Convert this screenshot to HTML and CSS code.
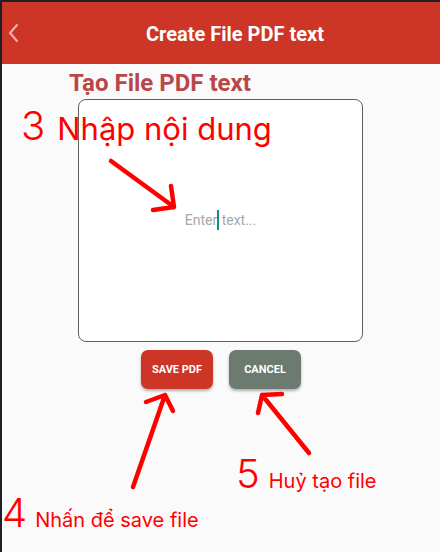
FILE: index.html
```html
<!DOCTYPE html>
<html>
<head>
<meta charset="utf-8">
<link rel="stylesheet" href="styles.css">
</head>
<body>
<div class="frame">
  <header class="appbar">
    <svg class="back" width="12" height="20" viewBox="0 0 12 20"><path d="M9 2 L2 10 L9 18" fill="none" stroke="#f2b3ab" stroke-width="2" stroke-linecap="round" stroke-linejoin="round"/></svg>
    <h1 class="appbar-title">Create File PDF text</h1>
  </header>
  <main class="content">
    <h2 class="page-title">Tạo File PDF text</h2>
    <div class="editor">
      <span class="placeholder">Enter<span class="caret"></span> text...</span>
    </div>
    <div class="actions">
      <button class="btn btn-save">SAVE PDF</button>
      <button class="btn btn-cancel">CANCEL</button>
    </div>
  </main>
  <svg class="arrows" width="440" height="552" viewBox="0 0 440 552">
    <g fill="none" stroke="#ff0000" stroke-width="4.5" stroke-linecap="round" stroke-linejoin="round">
      <path d="M111 161 L174 207 M153 210 L174 207 L171 186"/>
      <path d="M133 487 L165 395 M146 402 L165 395 L173 411"/>
      <path d="M309 453 L262 395 M282 394 L262 395 L258 413"/>
    </g>
  </svg>
  <div class="note note-3"><span class="num">3</span><span class="label-lg">Nhập nội dung</span></div>
  <div class="note note-5"><span class="num">5</span><span class="label">Huỷ tạo file</span></div>
  <div class="note note-4"><span class="num">4</span><span class="label">Nhấn để save file</span></div>
</div>
</body>
</html>
```
FILE: styles.css
```css
* { box-sizing: border-box; margin: 0; padding: 0; }
html, body { width: 440px; height: 552px; overflow: hidden; }
body { background: #fafafa; font-family: Roboto, "Noto Sans", sans-serif; }
.frame {
  position: relative;
  width: 440px;
  height: 552px;
  border-top: 2px solid #1f1f27;
  border-left: 2px solid #1f1f27;
  background: #fafafa;
}
.appbar {
  height: 62px;
  background: #cd3527;
  display: flex;
  align-items: center;
  padding-left: 6px;
}
.back { flex: none; }
.appbar-title {
  flex: 1;
  text-align: center;
  color: #fff;
  font-size: 20px;
  font-weight: 700;
  margin-left: 6px;
  margin-right: -4px;
  padding-top: 1px;
}
.content {
  display: flex;
  flex-direction: column;
  align-items: center;
}
.page-title {
  align-self: flex-start;
  margin: 6px 0 0 67px;
  font-size: 24px;
  line-height: 27px;
  font-weight: 700;
  color: #b9474a;
}
.editor {
  margin-top: 2px;
  margin-left: -1px;
  width: 285px;
  height: 243px;
  background: #fff;
  border: 1px solid #5f5f5f;
  border-radius: 8px;
  display: flex;
  align-items: center;
  justify-content: center;
  padding-bottom: 2px;
}
.placeholder {
  font-size: 14px;
  color: #a8a8a8;
  white-space: pre;
}
.caret {
  display: inline-block;
  width: 2px;
  height: 20px;
  background: #1a8a7a;
  vertical-align: -5px;
  margin: 0 -1px 0 0;
}
.actions {
  margin-top: 8px;
  display: flex;
  gap: 16px;
}
.btn {
  width: 72px;
  height: 39px;
  border: none;
  border-radius: 7px;
  color: #fff;
  font-family: Roboto, sans-serif;
  font-size: 11px;
  font-weight: 700;
  box-shadow: 0 2px 3px rgba(0,0,0,0.3);
}
.btn-save { background: #cd3527; }
.btn-cancel { background: #6b7b70; }
.arrows { position: absolute; left: -2px; top: -2px; pointer-events: none; }
.note {
  position: absolute;
  color: #ff0000;
  font-family: Inter, "Noto Sans", sans-serif;
  display: flex;
  align-items: baseline;
  white-space: nowrap;
}
.num { font-size: 40px; font-weight: 300; line-height: 1; }
.label-lg { font-size: 31px; font-weight: 400; line-height: 1; }
.label { font-size: 20px; font-weight: 400; line-height: 1; }
.note-3 { left: 19px; top: 104px; gap: 12px; }
.note-5 { left: 234px; top: 452px; gap: 9px; }
.note-4 { left: 0px; top: 491px; gap: 8px; }
```
